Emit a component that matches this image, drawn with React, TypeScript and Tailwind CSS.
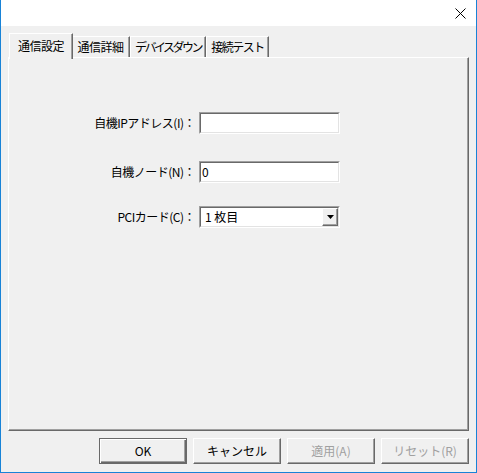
const font = { fontFamily: '"Noto Sans CJK JP", "Noto Sans", sans-serif' };

function Tab({ label, active, w, tr }: { label: string; active?: boolean; w: string; tr: string }) {
  if (active) {
    return (
      <div
        className={`${w} ${tr} h-[26px] -mr-[2px] relative z-10 bg-[#f0f0f0] border-t border-l border-white border-r border-r-[#696969] flex items-start justify-center pt-[3px] text-[12px] whitespace-nowrap text-black`}
        style={{ boxShadow: "inset -1px 0 0 #a0a0a0" }}
      >
        {label}
      </div>
    );
  }
  return (
    <div
      className={`${w} ${tr} h-[21px] mt-[3px] bg-[#f0f0f0] border-t border-l border-white border-r border-r-[#696969] flex items-start justify-center pt-[1px] text-[12px] whitespace-nowrap text-black`}
      style={{ boxShadow: "inset -1px 0 0 #a0a0a0" }}
    >
      {label}
    </div>
  );
}

function Sunken({ children }: { children?: React.ReactNode }) {
  return (
    <div className="w-[141px] h-[22px] border border-t-[#a0a0a0] border-l-[#a0a0a0] border-r-white border-b-white">
      <div className="w-full h-full bg-white border border-t-[#696969] border-l-[#696969] border-r-[#e3e3e3] border-b-[#e3e3e3] flex items-center pl-[1px] text-[12px] text-black">
        {children}
      </div>
    </div>
  );
}

function Btn({ label, isDefault, disabled }: { label: string; isDefault?: boolean; disabled?: boolean }) {
  return (
    <div
      className={`w-[88px] h-[26px] flex items-center justify-center text-[12px] ${
        isDefault ? "border border-[#696969]" : "border border-white border-r-[#696969] border-b-[#696969]"
      } ${disabled ? "text-[#a0a0a0]" : "text-black"}`}
      style={{
        boxShadow: isDefault
          ? "inset 1px 1px 0 #fff, inset -1px -1px 0 #696969, inset -2px -2px 0 #a0a0a0"
          : "inset -1px -1px 0 #a0a0a0",
      }}
    >
      {label}
    </div>
  );
}

export default function App() {
  return (
    <div
      className="w-[477px] h-[473px] flex flex-col bg-[#f0f0f0] border-l border-r border-b border-[#1883d7] select-none"
      style={font}
    >
      <div className="h-[26px] bg-white flex justify-end items-center pr-[10px]">
        <svg width="11" height="11" viewBox="0 0 11 11" className="mt-[1px]">
          <path d="M0.5 0.5 L10.5 10.5 M10.5 0.5 L0.5 10.5" stroke="#000" strokeWidth="1" />
        </svg>
      </div>

      <div className="flex-1 flex flex-col px-[7px] pt-[7px]">
        <div className="flex items-start h-[24px] pl-[1px]">
          <Tab label="通信設定" active w="w-[64px]" tr="tracking-[-0.5px]" />
          <Tab label="通信詳細" w="w-[59px]" tr="tracking-[-0.5px]" />
          <Tab label="デバイスダウン" w="w-[76px]" tr="tracking-[-2.5px]" />
          <Tab label="接続テスト" w="w-[63px]" tr="tracking-[-1.5px]" />
        </div>

        <div
          className="h-[374px] border-t border-l border-white border-r border-b border-r-[#696969] border-b-[#696969] flex flex-col"
          style={{ boxShadow: "inset -1px -1px 0 #a0a0a0" }}
        >
          <div className="flex flex-col pt-[54px] gap-[27px]">
            <div className="flex items-center h-[22px]">
              <div className="w-[186px] text-right text-[12px] tracking-[-0.5px] text-black">自機IPアドレス(I)：</div>
              <div className="ml-[4px]">
                <Sunken />
              </div>
            </div>
            <div className="flex items-center h-[22px]">
              <div className="w-[186px] text-right text-[12px] tracking-[-0.5px] text-black">自機ノード(N)：</div>
              <div className="ml-[4px]">
                <Sunken>0</Sunken>
              </div>
            </div>
            <div className="flex items-center h-[22px] -mt-[4px]">
              <div className="w-[186px] text-right text-[12px] tracking-[-0.5px] text-black">PCIカード(C)：</div>
              <div className="ml-[4px]">
                <div className="w-[141px] h-[22px] border border-t-[#a0a0a0] border-l-[#a0a0a0] border-r-white border-b-white">
                  <div className="w-full h-full bg-white border border-t-[#696969] border-l-[#696969] border-r-[#e3e3e3] border-b-[#e3e3e3] flex items-center text-[12px] text-black">
                    <span className="flex-1 pl-[4px]">1 枚目</span>
                    <div
                      className="w-[16px] h-full bg-[#f0f0f0] border border-white border-r-[#696969] border-b-[#696969] flex items-center justify-center"
                      style={{ boxShadow: "inset -1px -1px 0 #a0a0a0" }}
                    >
                      <svg width="7" height="4" viewBox="0 0 7 4">
                        <path d="M0 0 H7 L3.5 4 Z" fill="#000" />
                      </svg>
                    </div>
                  </div>
                </div>
              </div>
            </div>
          </div>
        </div>

        <div className="flex justify-end gap-[6px] mt-[7px]">
          <Btn label="OK" isDefault />
          <Btn label="キャンセル" />
          <Btn label="適用(A)" disabled />
          <Btn label="リセット(R)" disabled />
        </div>
      </div>
    </div>
  );
}
